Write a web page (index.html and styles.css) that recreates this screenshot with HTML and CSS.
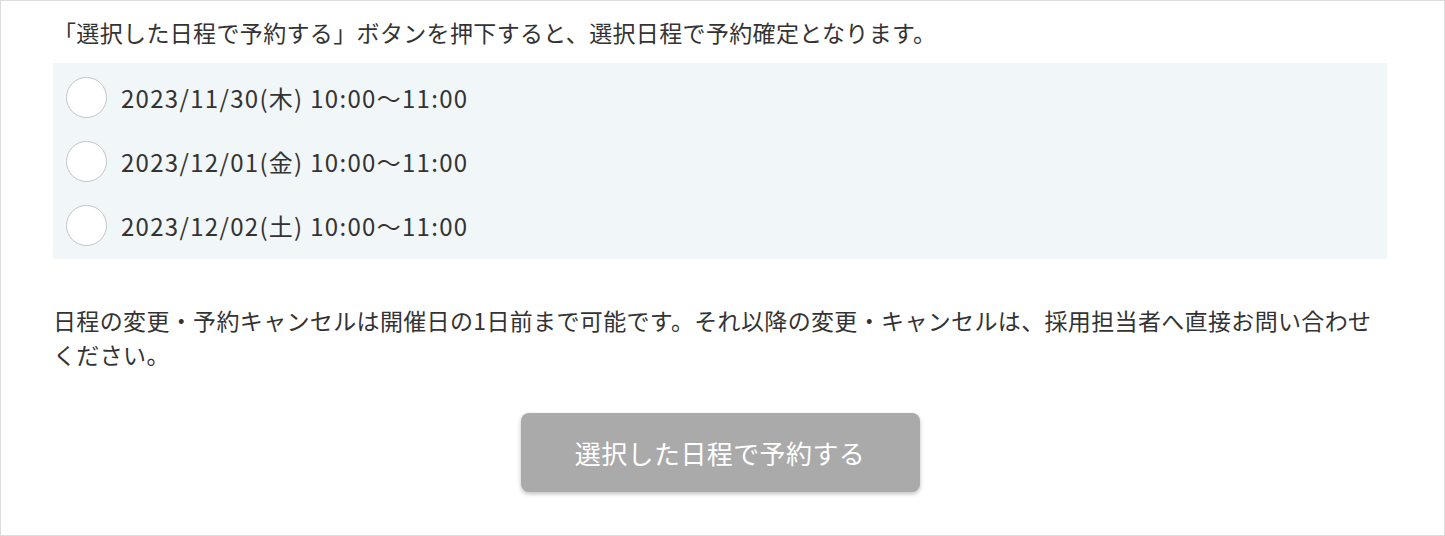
FILE: index.html
```html
<!DOCTYPE html>
<html lang="ja">
<head>
  <meta charset="UTF-8" />
  <meta name="viewport" content="width=device-width, initial-scale=1.0"/>
  <title>日程選択</title>
  <link rel="stylesheet" href="styles.css">
</head>
<body>

  <div class="panel">
    <p class="lead">「選択した日程で予約する」ボタンを押下すると、選択日程で予約確定となります。</p>

    <div class="slot-list">
      <label class="slot">
        <input type="radio" name="slot" value="2023-11-30">
        <span class="radio-mark"></span>
        <span class="slot-text">2023/11/30(木) 10:00〜11:00</span>
      </label>
      <label class="slot">
        <input type="radio" name="slot" value="2023-12-01">
        <span class="radio-mark"></span>
        <span class="slot-text">2023/12/01(金) 10:00〜11:00</span>
      </label>
      <label class="slot">
        <input type="radio" name="slot" value="2023-12-02">
        <span class="radio-mark"></span>
        <span class="slot-text">2023/12/02(土) 10:00〜11:00</span>
      </label>
    </div>

    <p class="note">日程の変更・予約キャンセルは開催日の1日前まで可能です。それ以降の変更・キャンセルは、採用担当者へ直接お問い合わせください。</p>

    <div class="actions">
      <button id="reserve" class="reserve-btn" disabled>選択した日程で予約する</button>
    </div>
  </div>

  <script>
    const btn = document.getElementById("reserve");
    document.querySelectorAll('.slot input').forEach(radio =>
      radio.addEventListener('change', () => { btn.disabled = false; })
    );
  </script>

</body>
</html>
```

FILE: styles.css
```css
html, body {
  margin: 0;
  padding: 0;
}

body {
  font-family: "Noto Sans CJK JP", "Noto Sans", sans-serif;
  color: #333;
  background: #fff;
}

.panel {
  box-sizing: border-box;
  width: 1445px;
  height: 536px;
  border: 1px solid #dcdcdc;
  padding: 14px 57px 0 52px;
}

.lead,
.note {
  margin: 0;
  font-size: 23px;
  line-height: 34px;
  letter-spacing: 0.35px;
}

.slot-list {
  margin-top: 14px;
  padding: 2px 0;
  background-color: #f1f6f9;
}

.slot {
  display: flex;
  align-items: center;
  height: 64px;
  padding-left: 13px;
  cursor: pointer;
}

.slot input {
  display: none;
}

.radio-mark {
  box-sizing: border-box;
  width: 41px;
  height: 41px;
  border: 1.5px solid #c4c4c4;
  border-radius: 50%;
  background: #fff;
  flex-shrink: 0;
}

.slot input:checked + .radio-mark {
  border: 12px solid #0078d4;
}

.slot-text {
  margin-left: 14px;
  font-size: 24px;
  letter-spacing: 1.3px;
}

.note {
  margin-top: 44px;
}

.actions {
  display: flex;
  justify-content: center;
  margin-top: 42px;
}

.reserve-btn {
  width: 399px;
  height: 79px;
  border: none;
  border-radius: 8px;
  background-color: #aaa;
  color: #fff;
  font-family: inherit;
  font-size: 26px;
  letter-spacing: 0.4px;
  box-shadow: 0 2px 4px rgba(0, 0, 0, 0.25);
  cursor: pointer;
}

.reserve-btn:disabled {
  cursor: default;
}
```
